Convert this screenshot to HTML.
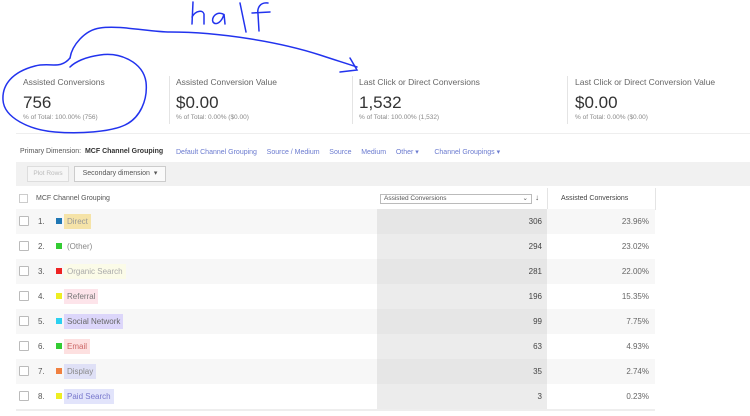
<!DOCTYPE html>
<html><head><style>
*{margin:0;padding:0;box-sizing:border-box}
body{width:750px;height:416px;background:#fff;font-family:"Liberation Sans",sans-serif;position:relative;overflow:hidden;color:#444}
.a{position:absolute;white-space:nowrap}
.t{font-size:8.5px;color:#666}
.v{font-size:17px;color:#333}
.s{font-size:6.5px;color:#888}
.dv{position:absolute;width:1px;background:#e4e4e4;top:76px;height:48px}
.row{position:absolute;left:16px;width:639px;height:25px;font-size:8px;color:#555}
.row.g{background:#f7f7f7}
.cb{position:absolute;left:3px;top:7px;width:10px;height:10px;border:1px solid #bbb;background:#fff;border-radius:1px}
.n{position:absolute;left:22px;top:8px}
.sq{position:absolute;left:40px;top:9px;width:6px;height:6px}
.lb{position:absolute;left:48px;top:5px;padding:2px 3px;height:15px;line-height:11px}
.m{position:absolute;left:361px;width:170px;top:0;height:25px;background:#ececec;text-align:right;padding:8px 5px 0 0;color:#444}
.g .m{background:#e6e6e6}
.p{position:absolute;left:531px;width:109px;top:0;height:25px;text-align:right;padding:8px 7px 0 0;color:#666}
</style></head><body>
<div class="a t" style="left:23px;top:77px">Assisted Conversions</div>
<div class="a v" style="left:23px;top:93px">756</div>
<div class="a s" style="left:23px;top:114px">% of Total: 100.00% (756)</div>
<div class="dv" style="left:169px"></div>
<div class="a t" style="left:176px;top:77px">Assisted Conversion Value</div>
<div class="a v" style="left:176px;top:93px">$0.00</div>
<div class="a s" style="left:176px;top:114px">% of Total: 0.00% ($0.00)</div>
<div class="dv" style="left:352px"></div>
<div class="a t" style="left:359px;top:77px">Last Click or Direct Conversions</div>
<div class="a v" style="left:359px;top:93px">1,532</div>
<div class="a s" style="left:359px;top:114px">% of Total: 100.00% (1,532)</div>
<div class="dv" style="left:567px"></div>
<div class="a t" style="left:575px;top:77px">Last Click or Direct Conversion Value</div>
<div class="a v" style="left:575px;top:93px">$0.00</div>
<div class="a s" style="left:575px;top:114px">% of Total: 0.00% ($0.00)</div>
<div class="a" style="left:16px;top:133px;width:734px;height:1px;background:#eee"></div>
<div class="a" style="left:20px;top:148px;font-size:7px;color:#555">Primary Dimension: &nbsp;<b style="color:#333">MCF Channel Grouping</b></div>
<div class="a" style="left:176px;top:148px;font-size:7px;color:#6b7bd0">Default Channel Grouping &nbsp;&nbsp;&nbsp; Source / Medium &nbsp;&nbsp;&nbsp; Source &nbsp;&nbsp;&nbsp; Medium &nbsp;&nbsp;&nbsp; Other ▾ &nbsp;&nbsp;&nbsp;&nbsp;&nbsp;&nbsp; Channel Groupings ▾</div>
<div class="a" style="left:16px;top:162px;width:734px;height:24px;background:#f1f1f1"></div>
<div class="a" style="left:27px;top:166px;width:42px;height:16px;border:1px solid #ddd;font-size:6.5px;color:#bbb;text-align:center;line-height:14px;background:#f6f6f6">Plot Rows</div>
<div class="a" style="left:74px;top:166px;width:92px;height:16px;border:1px solid #ccc;font-size:7px;color:#555;text-align:center;line-height:14px;background:#fafafa">Secondary dimension &nbsp;▾</div>
<div class="a" style="left:19px;top:194px;width:9px;height:9px;border:1px solid #ccc"></div>
<div class="a" style="left:36px;top:195px;font-size:7px;color:#555">MCF Channel Grouping</div>
<div class="a" style="left:380px;top:194px;width:152px;height:10px;border:1px solid #bbb;font-size:6.5px;color:#555;line-height:8px;padding-left:3px">Assisted Conversions<span style="float:right;padding-right:3px">⌄</span></div>
<div class="a" style="left:535px;top:193px;font-size:8px;color:#555">↓</div>
<div class="a" style="left:547px;top:188px;width:1px;height:22px;background:#e4e4e4"></div>
<div class="a" style="left:655px;top:188px;width:1px;height:22px;background:#e4e4e4"></div>
<div class="a" style="left:561px;top:195px;font-size:7px;color:#444">Assisted Conversions</div>

<div class="row g" style="top:209px"><div class="cb"></div><span class="n">1.</span><i class="sq" style="background:#1f77b4"></i><span class="lb" style="background:#f5e3a8;color:#999">Direct</span><div class="m">306</div><div class="p">23.96%</div></div>
<div class="row" style="top:234px"><div class="cb"></div><span class="n">2.</span><i class="sq" style="background:#3c3"></i><span class="lb" style="color:#888">(Other)</span><div class="m">294</div><div class="p">23.02%</div></div>
<div class="row g" style="top:259px"><div class="cb"></div><span class="n">3.</span><i class="sq" style="background:#e22"></i><span class="lb" style="background:#fbfbe8;color:#aaa">Organic Search</span><div class="m">281</div><div class="p">22.00%</div></div>
<div class="row" style="top:284px"><div class="cb"></div><span class="n">4.</span><i class="sq" style="background:#ee2"></i><span class="lb" style="background:#fde4ea;color:#777">Referral</span><div class="m">196</div><div class="p">15.35%</div></div>
<div class="row g" style="top:309px"><div class="cb"></div><span class="n">5.</span><i class="sq" style="background:#2bd0f0"></i><span class="lb" style="background:#dcd6fa;color:#666">Social Network</span><div class="m">99</div><div class="p">7.75%</div></div>
<div class="row" style="top:334px"><div class="cb"></div><span class="n">6.</span><i class="sq" style="background:#3c3"></i><span class="lb" style="background:#fde0e0;color:#c66">Email</span><div class="m">63</div><div class="p">4.93%</div></div>
<div class="row g" style="top:359px"><div class="cb"></div><span class="n">7.</span><i class="sq" style="background:#f08040"></i><span class="lb" style="background:#dfe0f6;color:#888">Display</span><div class="m">35</div><div class="p">2.74%</div></div>
<div class="row" style="top:384px"><div class="cb"></div><span class="n">8.</span><i class="sq" style="background:#ee2"></i><span class="lb" style="background:#e2e4fb;color:#77c">Paid Search</span><div class="m">3</div><div class="p">0.23%</div></div>
<div class="a" style="left:16px;top:409px;width:639px;height:2px;background:#eee"></div>

<svg class="a" style="left:0;top:0" width="750" height="416" fill="none" stroke="#2233ee" stroke-width="1.5" stroke-linecap="round">
<path d="M70 58 C60 70 50 62 35 66 C12 72 2 85 3 100 C4 118 30 130 55 132 C80 134 110 132 125 125 C140 118 148 100 146 82 C143 62 120 52 100 55 C85 57 75 62 70 67"/>
<path d="M70 58 C72 45 85 30 100 28 C120 25 150 32 170 32 C220 32 280 42 320 55 C335 60 345 63 357 67"/>
<path d="M340 72 L357 70 L350 58"/>
<path d="M193 2 L192 24 M192 17 C196 10 203 10 204 14 L204 24"/>
<path d="M223 14 C216 11 211 18 213 22 C216 26 222 22 224 14 L225 24"/>
<path d="M240 3 L246 32"/>
<path d="M268 3 C260 2 257 8 258 14 L259 31 M252 13 L270 12"/>
</svg>
</body></html>
